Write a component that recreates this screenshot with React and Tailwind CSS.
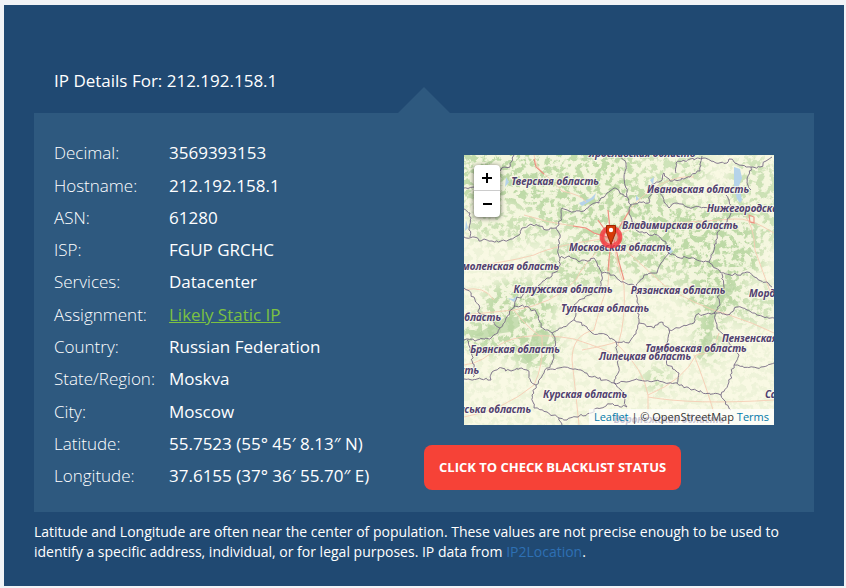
import React from "react";

const details = [
  ["Decimal:", "3569393153"],
  ["Hostname:", "212.192.158.1"],
  ["ASN:", "61280"],
  ["ISP:", "FGUP GRCHC"],
  ["Services:", "Datacenter"],
  ["Assignment:", "Likely Static IP"],
  ["Country:", "Russian Federation"],
  ["State/Region:", "Moskva"],
  ["City:", "Moscow"],
  ["Latitude:", "55.7523 (55° 45′ 8.13″ N)"],
  ["Longitude:", "37.6155 (37° 36′ 55.70″ E)"],
];

// Region borders, as x,y pairs in map units (310 x 270).
const borders = [
  [50, 0, 48, 6, 46, 12, 40, 12, 36, 16, 32, 20],
  [0, 33, 10, 32],
  [0, 54, 6, 58, 7, 63, 5, 75, 6, 82],
  [0, 82, 10, 82, 15, 86, 20, 84, 28, 86, 37, 86, 47, 84, 55, 80, 58, 73, 65, 70, 75, 71, 82, 75, 92, 73],
  [92, 73, 95, 70, 97, 63, 98, 53, 105, 56, 120, 56, 127, 50, 135, 48, 137, 43, 143, 38, 150, 33, 163, 42],
  [92, 73, 96, 83, 94, 95, 96, 103, 105, 101, 115, 107, 130, 103, 133, 108, 138, 118, 138, 125, 135, 136, 128, 139, 115, 145, 110, 150, 112, 158, 110, 165],
  [96, 103, 95, 112, 88, 121, 83, 123, 75, 130, 62, 137, 52, 145, 50, 152],
  [0, 133, 10, 142, 15, 150, 15, 158, 25, 163, 36, 173],
  [0, 185, 13, 185, 27, 183, 36, 173, 42, 163, 50, 152, 62, 151, 72, 157, 77, 172, 88, 178, 98, 173, 110, 165],
  [110, 165, 123, 172, 128, 178, 143, 180, 152, 187, 165, 188, 170, 180, 175, 168],
  [88, 178, 91, 186, 90, 195, 88, 208, 80, 218, 72, 230],
  [3, 185, 7, 197, 10, 213, 9, 222],
  [0, 224, 17, 224, 27, 225, 28, 217, 35, 213, 47, 216, 57, 213, 63, 215, 67, 227, 72, 230],
  [83, 215, 100, 212, 117, 215, 128, 222, 140, 225, 150, 228, 170, 225, 190, 226, 213, 228, 227, 235, 257, 240],
  [152, 187, 152, 200, 155, 213, 150, 228],
  [72, 230, 68, 240, 70, 253, 83, 257, 95, 263, 103, 265, 113, 262, 127, 258, 133, 253, 147, 249, 163, 252],
  [95, 263, 98, 270],
  [157, 0, 162, 8, 160, 22, 162, 33, 163, 42, 167, 50, 165, 57, 168, 67, 172, 75, 180, 78, 193, 80, 202, 87, 205, 98],
  [167, 50, 175, 47, 185, 48, 187, 38, 197, 37, 200, 47, 205, 53, 213, 48, 223, 52, 267, 53],
  [187, 38, 187, 30, 197, 26, 200, 18, 206, 26, 226, 22, 236, 16, 238, 1],
  [212, 18, 212, 8, 226, 4, 240, 3, 252, 8, 263, 8, 265, 4, 275, 10, 287, 12, 283, 28, 287, 35],
  [287, 12, 296, 12, 302, 6, 308, 2],
  [262, 40, 265, 45, 267, 58, 263, 67, 253, 78, 250, 95, 245, 107],
  [205, 98, 213, 102, 227, 103, 245, 107, 257, 118, 273, 120, 283, 117, 293, 123, 308, 132],
  [205, 98, 197, 108, 193, 118, 180, 120, 172, 132, 173, 147, 175, 168],
  [138, 118, 150, 120, 157, 127, 172, 132],
  [258, 119, 260, 132, 253, 142, 256, 150, 250, 158],
  [175, 168, 190, 173, 197, 167, 205, 175, 217, 172, 230, 168, 232, 160, 250, 158, 263, 160, 273, 152, 283, 155, 293, 160, 310, 163],
  [250, 158, 253, 173, 265, 187, 275, 200, 270, 210, 293, 213, 310, 208],
  [270, 210, 265, 227, 257, 240, 267, 255],
  [205, 175, 203, 188, 203, 210, 215, 218, 213, 228],
  [150, 228, 158, 236, 163, 252],
];

const roads = [
  "M70 0 Q72 12 79 18 Q90 26 98 36 Q118 40 122 47",
  "M109 71 Q122 72 130 78 L146 83",
  "M134 65 L146 82 L144 55",
  "M0 112 Q40 108 70 100 Q90 90 146 83",
  "M0 135 Q20 130 30 145 M60 60 Q85 68 109 71",
  "M146 83 Q146 110 144 130 Q136 150 130 175 Q108 180 108 205 Q112 240 115 270",
  "M149 83 Q152 108 160 130 Q162 165 154 190 Q180 215 184 240 L184 270",
  "M149 82 Q156 70 166 54 Q178 40 195 30 Q215 20 230 22",
  "M150 82 Q175 68 195 69 Q240 66 270 64 Q285 62 310 78",
  "M150 85 Q176 108 200 130 Q230 150 265 160 Q290 168 310 178",
  "M144 86 Q118 110 112 125 Q88 150 50 155 L0 160",
  "M50 155 Q65 175 78 182 Q80 210 70 230 Q40 255 0 262",
  "M0 210 Q20 208 35 190 Q60 175 110 184 Q145 195 160 205",
  "M184 240 Q220 225 232 200 Q250 200 255 178",
  "M184 242 Q230 250 310 245",
  "M118 195 Q145 190 152 187 M230 200 Q240 225 250 258",
  "M280 60 Q290 70 291 95 Q300 120 306 136",
];

const labels = [
  [91, 30, "middle", "Тверская область"],
  [178, 2, "middle", "Ярославская область"],
  [234, 38, "middle", "Ивановская область"],
  [243, 57, "start", "Нижегородская область"],
  [216, 74, "middle", "Владимирская область"],
  [156, 96, "middle", "Московская область"],
  [95, 115, "end", "Смоленская область"],
  [99, 138, "middle", "Калужская область"],
  [214, 139, "middle", "Рязанская область"],
  [285, 142, "start", "Мордовия"],
  [141, 157, "middle", "Тульская область"],
  [37, 166, "end", "Могилёвская область"],
  [51, 198, "middle", "Брянская область"],
  [258, 187, "start", "Пензенская область"],
  [232, 197, "middle", "Тамбовская область"],
  [181, 205, "middle", "Липецкая область"],
  [15, 219, "end", "Гомельская область"],
  [121, 243, "middle", "Курская область"],
  [301, 243, "start", "Саратовская область"],
  [67, 258, "end", "Сумська область"],
  [205, 268, "middle", "Воронежская область"],
];

// Woodland density: cx, cy, rx, ry, opacity.
const woods = [
  [20, 15, 70, 35, 0.9],
  [90, 12, 80, 45, 0.9],
  [50, 72, 50, 16, 0.7],
  [130, 50, 60, 30, 0.8],
  [165, 75, 55, 40, 0.8],
  [230, 80, 60, 32, 1],
  [260, 108, 40, 18, 1],
  [185, 15, 60, 30, 0.65],
  [290, 50, 30, 50, 0.7],
  [115, 110, 40, 25, 0.8],
  [55, 150, 38, 24, 0.95],
  [30, 180, 38, 20, 0.9],
  [70, 190, 26, 24, 0.9],
  [250, 140, 30, 22, 1],
  [245, 180, 14, 28, 0.95],
  [205, 120, 40, 15, 0.6],
  [192, 224, 16, 12, 0.7],
  [290, 150, 30, 20, 0.6],
];

function jag(points, seed) {
  let s = seed * 7919 + 17;
  const random = () => {
    s = (s * 16807) % 2147483647;
    return s / 2147483647 - 0.5;
  };
  let d = `M${points[0]} ${points[1]}`;
  for (let i = 2; i < points.length; i += 2) {
    const [x0, y0, x1, y1] = points.slice(i - 2, i + 2);
    const steps = Math.max(2, Math.round(Math.hypot(x1 - x0, y1 - y0) / 2.5));
    for (let k = 1; k < steps; k++) {
      const t = k / steps;
      d += `L${(x0 + (x1 - x0) * t + random() * 2.6).toFixed(1)} ${(y0 + (y1 - y0) * t + random() * 2.6).toFixed(1)}`;
    }
    d += `L${x1} ${y1}`;
  }
  return d;
}

function MapTiles() {
  return (
    <svg viewBox="0 0 310 270" preserveAspectRatio="xMidYMid slice" className="block h-full w-full" role="img" aria-label="Map of the Moscow region">
      <defs>
        <filter id="forest" x="0" y="0" width="100%" height="100%" colorInterpolationFilters="sRGB">
          <feTurbulence type="fractalNoise" baseFrequency="0.16" numOctaves="5" seed="8" />
          <feColorMatrix values="0 0 0 0 0.74  0 0 0 0 0.85  0 0 0 0 0.65  8 0 0 0 -3.7" />
        </filter>
        <filter id="soft" x="-50%" y="-50%" width="200%" height="200%">
          <feGaussianBlur stdDeviation="6" />
        </filter>
        <mask id="density">
          <rect width="310" height="270" fill="#333" />
          <g filter="url(#soft)" fill="#fff">
            {woods.map(([cx, cy, rx, ry, o], i) => (
              <ellipse key={i} cx={cx} cy={cy} rx={rx} ry={ry} fillOpacity={o} />
            ))}
          </g>
        </mask>
      </defs>
      <rect width="310" height="270" fill="#fbfae6" />
      <g mask="url(#density)">
        <rect width="310" height="270" fill="#dfeac6" fillOpacity="0.3" />
        <rect width="310" height="270" filter="url(#forest)" />
      </g>
      <g fill="#b9d5a4" fillOpacity="0.75">
        <path d="M250 132l10-3 12 1-4 9-8 5-6 12-6 14-6-2 5-12 5-10z" />
        <path d="M240 182l7-7 2 9-5 10-8 11-3-3 4-9z" />
        <path d="M28 170l14-8 12 0 2 9-10 6-14 2-14 6-10-3z" />
        <path d="M70 178l8-4 8 5-4 12-10 12-10 6-6-2 8-14z" />
      </g>
      <g fill="#b5d3ea">
        <path d="M270 12l6 2 2 9-3 8 3 14-2 3-3-4-3-11z" />
        <path d="M186 25l4-3-1 8zM172 40l3 4-3 2zM42 22l3 5-4 5zM2 65l2 8-3 3zM115 48l12-5 5-5-2 6-12 7z" />
        <path d="M44 143l5 1 5-4-4 7zM205 93l4 3-4 4z" />
      </g>
      <g fill="none" stroke="#f6cdb4" strokeWidth="0.9">
        {roads.map((d) => <path key={d} d={d} />)}
      </g>
      <g fill="none" stroke="#ee8f80" strokeWidth="1.1">
        <path d="M70 4l2 8 8 7M109 71l13 2 8 5 16 5M134 65l12 17M147 86l-2 18-1 12M150 85l5 22 5 18M285 60l1 7 4 1v-6zM144 55l3 27M149 82l9-14 8-13" />
        <circle cx="147" cy="83" r="9" />
      </g>
      <g fill="none" stroke="#766a85" strokeWidth="0.9" strokeLinejoin="round">
        {borders.map((p, i) => <path key={i} d={jag(p, i + 1)} />)}
      </g>
      <g className="font-['Noto_Sans'] text-[10px] font-bold italic" fill="#51416f" stroke="#fffdf2" strokeOpacity="0.7" strokeWidth="2" strokeLinejoin="round" style={{ paintOrder: "stroke" }}>
        {labels.map(([x, y, anchor, text]) => (
          <text key={text} x={x} y={y} textAnchor={anchor}>{text}</text>
        ))}
      </g>
      <circle cx="147" cy="82" r="11.5" fill="#f03" fillOpacity="0.2" />
      <circle cx="147" cy="82" r="9" fill="none" stroke="#f4363b" strokeOpacity="0.75" strokeWidth="4.5" />
      <path d="M142.500 70.500h9v7l-4.500 12-4.500-12z" fill="#d63a08" stroke="#9c2504" />
      <circle cx="147" cy="75" r="2.200" fill="#fff" />
    </svg>
  );
}

export default function App() {
  return (
    <div className="bg-[#f1f3f6] pt-[5px] pr-0.5 pb-0.5 pl-1 font-['Open_Sans',sans-serif] text-white">
      <main className="bg-[#204972] px-[30px] pt-16 pb-6">
        <h1 className="px-5 text-[17px] leading-6">IP Details For: 212.192.158.1</h1>
        <div className="flex justify-center">
          <svg viewBox="0 0 52 26" className="-mt-1.5 h-[26px] w-[52px]" aria-hidden="true">
            <path d="M0 26L26 0l26 26z" fill="#2e597f" />
          </svg>
        </div>
        <section className="grid grid-cols-2 bg-[#2e597f] pb-5">
          <dl className="mt-6 grid h-[355px] grid-rows-11 pl-5 text-[17px]">
            {details.map(([name, value]) => (
              <div key={name} className="flex items-center whitespace-nowrap">
                <dt className="w-[115px] shrink-0 font-light">{name}</dt>
                <dd className="font-medium">
                  {name === "Assignment:" ? (
                    <a href="#static" className="font-normal text-[#7cc142] underline">{value}</a>
                  ) : value}
                </dd>
              </div>
            ))}
          </dl>
          <div className="pt-[42px]">
            <div className="relative mx-10 h-[270px] overflow-hidden">
              <MapTiles />
              <div className="absolute top-2.5 left-2.5 flex w-[26px] flex-col overflow-hidden rounded-sm bg-white shadow-[0_1px_5px_rgba(0,0,0,0.65)]">
                <button type="button" aria-label="Zoom in" className="flex h-[26px] items-center justify-center border-b border-[#ccc]">
                  <svg viewBox="0 0 12 12" className="h-3 w-3" aria-hidden="true"><path d="M1 6h10M6 1v10" stroke="#000" strokeWidth="2" /></svg>
                </button>
                <button type="button" aria-label="Zoom out" className="flex h-[26px] items-center justify-center">
                  <svg viewBox="0 0 12 12" className="h-3 w-3" aria-hidden="true"><path d="M2 6h9" stroke="#000" strokeWidth="2" /></svg>
                </button>
              </div>
              <div className="absolute right-0 bottom-0 bg-white/70 px-[5px] text-[11px] leading-4 whitespace-nowrap text-[#333]">
                <a href="#leaflet" className="text-[#0078a8]">Leaflet</a> | © OpenStreetMap <a href="#terms" className="text-[#0078a8]">Terms</a>
              </div>
            </div>
            <button type="button" className="mt-5 h-[45px] rounded-lg bg-[#f64237] px-[15px] text-[13px] font-bold whitespace-nowrap">
              CLICK TO CHECK BLACKLIST STATUS
            </button>
          </div>
        </section>
        <p className="mt-2.5 text-sm leading-5">
          Latitude and Longitude are often near the center of population. These values are not precise enough to be used to identify a specific address, individual, or for legal purposes. IP data from <a href="#ip2location" className="text-[#2e70b4]">IP2Location</a>.
        </p>
      </main>
    </div>
  );
}
